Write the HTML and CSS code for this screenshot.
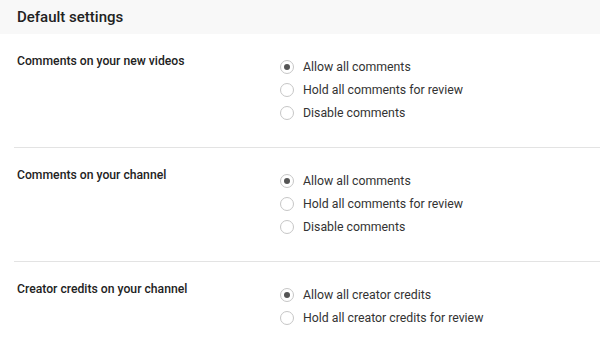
FILE: index.html
```html
<!DOCTYPE html>
<html lang="en">

<head>
    <meta charset="UTF-8">
    <meta name="viewport" content="width=device-width, initial-scale=1.0">
    <title>Default settings</title>
    <link rel="stylesheet" href="styles.css">
</head>

<body>
    <header class="settings-header">
        <h1>Default settings</h1>
    </header>

    <div class="section">
        <div class="section-label">Comments on your new videos</div>
        <div class="options">
            <label class="option"><span class="radio checked"></span>Allow all comments</label>
            <label class="option"><span class="radio"></span>Hold all comments for review</label>
            <label class="option"><span class="radio"></span>Disable comments</label>
        </div>
    </div>

    <div class="section">
        <div class="section-label">Comments on your channel</div>
        <div class="options">
            <label class="option"><span class="radio checked"></span>Allow all comments</label>
            <label class="option"><span class="radio"></span>Hold all comments for review</label>
            <label class="option"><span class="radio"></span>Disable comments</label>
        </div>
    </div>

    <div class="section">
        <div class="section-label">Creator credits on your channel</div>
        <div class="options">
            <label class="option"><span class="radio checked"></span>Allow all creator credits</label>
            <label class="option"><span class="radio"></span>Hold all creator credits for review</label>
        </div>
    </div>
</body>

</html>
```

FILE: styles.css
```css
body {
    margin: 0;
    background-color: #fff;
    font-family: Roboto, "Liberation Sans", sans-serif;
    color: #222;
}

.settings-header {
    background-color: #f8f8f8;
    height: 34px;
    padding: 0 17px;
    display: flex;
    align-items: center;
}

.settings-header h1 {
    margin: 0;
    font-size: 15px;
    font-weight: 500;
    color: #222;
}

.section {
    display: flex;
    margin-left: 14px;
    padding: 18px 0 25px 3px;
    border-bottom: 1px solid #e3e3e3;
}

.section:last-child {
    border-bottom: none;
}

.section-label {
    width: 263px;
    font-size: 12.2px;
    font-weight: 500;
    line-height: 18px;
}

.options {
    display: flex;
    flex-direction: column;
    gap: 5px;
    padding-top: 6px;
}

.option {
    display: flex;
    align-items: center;
    height: 18px;
    font-size: 12.3px;
    color: #333;
}

.radio {
    width: 12px;
    height: 12px;
    border: 1px solid #c6c6c6;
    border-radius: 50%;
    margin-right: 9px;
    display: flex;
    align-items: center;
    justify-content: center;
    background-color: #fff;
}

.radio.checked::after {
    content: "";
    width: 6px;
    height: 6px;
    border-radius: 50%;
    background-color: #555;
}
```
